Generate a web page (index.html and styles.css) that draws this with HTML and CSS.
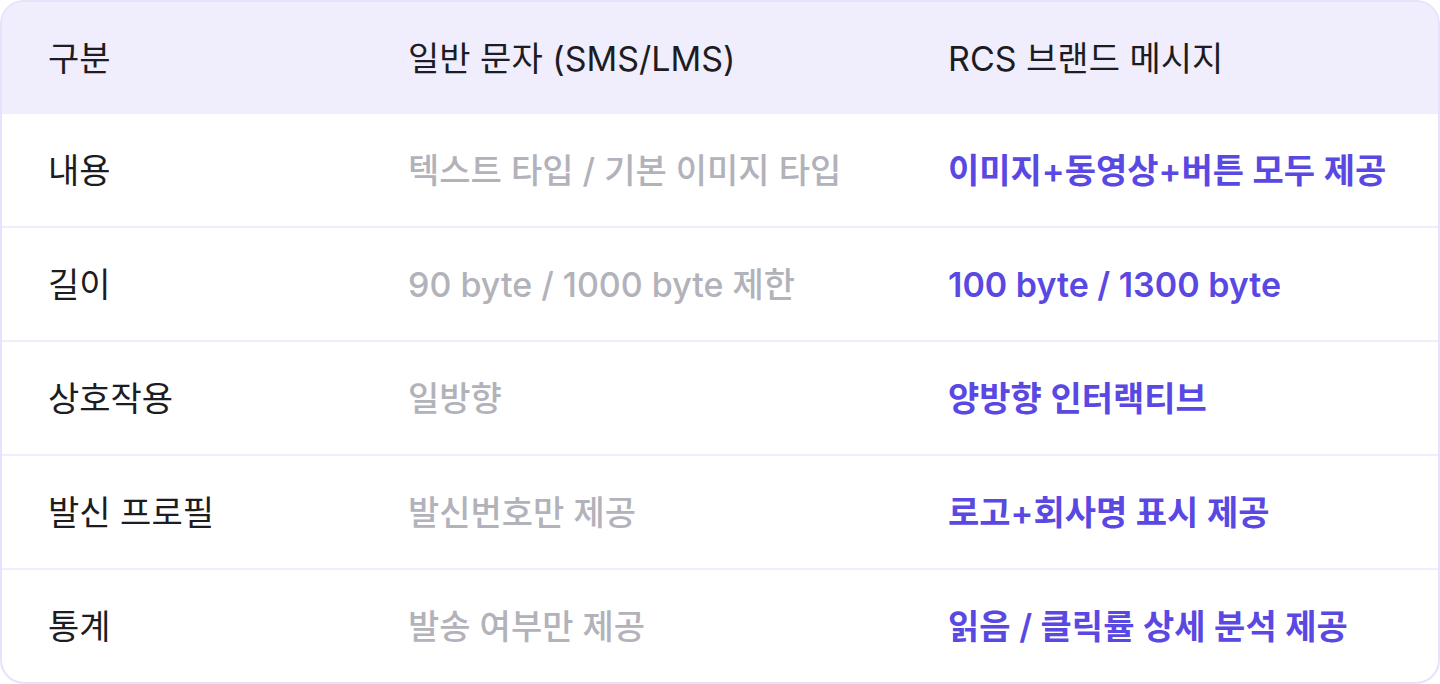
FILE: index.html
```html
<!DOCTYPE html>
<html lang="ko">
<head>
<meta charset="utf-8">
<link rel="stylesheet" href="styles.css">
</head>
<body>
<div class="table">
  <div class="row head">
    <div class="cell c1">구분</div>
    <div class="cell c2">일반 문자 (SMS/LMS)</div>
    <div class="cell c3">RCS 브랜드 메시지</div>
  </div>
  <div class="row first">
    <div class="cell c1">내용</div>
    <div class="cell c2 muted">텍스트 타입 / 기본 이미지 타입</div>
    <div class="cell c3 accent">이미지+동영상+버튼 모두 제공</div>
  </div>
  <div class="row">
    <div class="cell c1">길이</div>
    <div class="cell c2 muted">90 byte / 1000 byte 제한</div>
    <div class="cell c3 accent">100 byte / 1300 byte</div>
  </div>
  <div class="row">
    <div class="cell c1">상호작용</div>
    <div class="cell c2 muted">일방향</div>
    <div class="cell c3 accent">양방향 인터랙티브</div>
  </div>
  <div class="row">
    <div class="cell c1">발신 프로필</div>
    <div class="cell c2 muted">발신번호만 제공</div>
    <div class="cell c3 accent">로고+회사명 표시 제공</div>
  </div>
  <div class="row">
    <div class="cell c1">통계</div>
    <div class="cell c2 muted">발송 여부만 제공</div>
    <div class="cell c3 accent">읽음 / 클릭률 상세 분석 제공</div>
  </div>
</div>
</body>
</html>
```

FILE: styles.css
```css
* { box-sizing: border-box; }
html, body { margin: 0; padding: 0; background: #ffffff; }
body {
  font-family: Inter, "Noto Sans CJK KR", "Noto Sans", sans-serif;
  color: #1c1c22;
}
.table {
  width: 1440px;
  height: 684px;
  border: 2px solid #e6e2fb;
  border-radius: 24px;
  overflow: hidden;
  display: flex;
  flex-direction: column;
}
.row {
  display: flex;
  align-items: center;
  height: 114px;
  border-top: 2px solid #f0eefb;
  padding-top: 2px;
}
.row.head {
  height: 112px;
  border-top: none;
  background: #f0edfd;
}
.row.first {
  height: 112px;
  border-top: none;
}
.cell {
  font-size: 34px;
  line-height: 40px;
  letter-spacing: 0;
  font-weight: 400;
}
.c1 { width: 406px; padding-left: 46px; }
.c2 { width: 540px; }
.c3 { flex: 1; }
.muted { color: #b2b2ba; font-weight: 500; }
.accent { color: #5a48e3; font-weight: 600; }
```
